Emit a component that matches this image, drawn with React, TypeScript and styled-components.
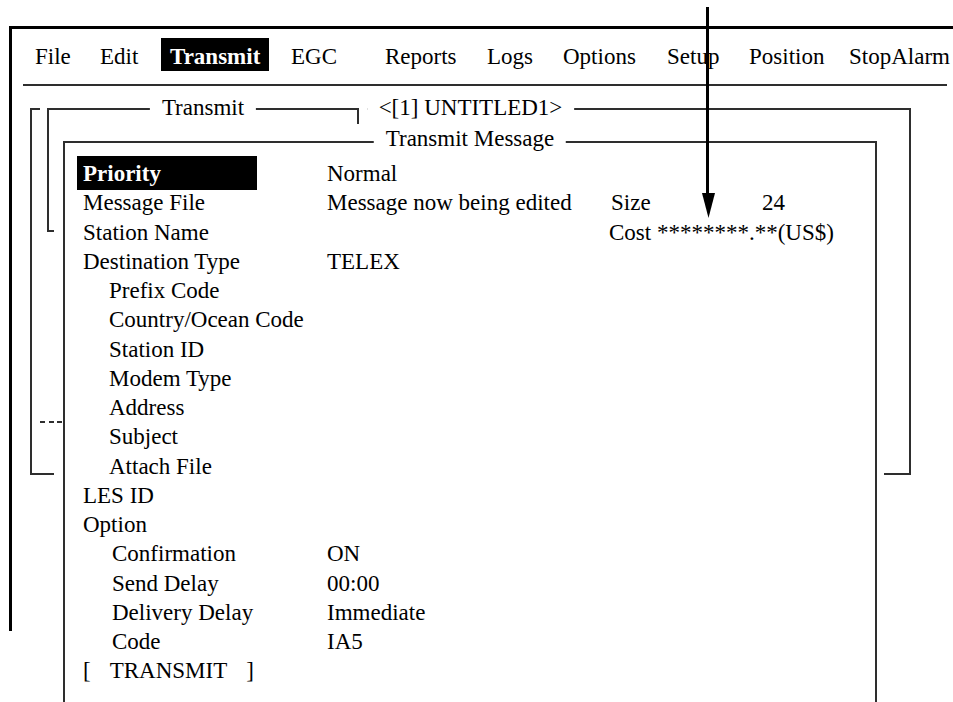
import React from "react";
import styled, { createGlobalStyle } from "styled-components";

const SERIF = `"Liberation Serif", "Times New Roman", "DejaVu Serif", serif`;

const Global = createGlobalStyle`
  html, body { margin: 0; padding: 0; background: #fff; }
  body {
    width: 953px;
    height: 702px;
    overflow: hidden;
    font-family: ${SERIF};
    font-size: 23px;
    color: #000;
  }
`;

const LINE = "#2e2e2e";

const Screen = styled.div`
  position: relative;
  width: 953px;
  height: 702px;
  overflow: hidden;
  box-sizing: border-box;
  padding: 26px 0 0 9px;
  font-family: ${SERIF};
  font-size: 23px;
`;

const Frame = styled.div`
  width: 960px;
  height: 605px;
  box-sizing: border-box;
  border-top: 3px solid #000;
  border-left: 3px solid #000;
`;

const MenuBar = styled.nav`
  display: flex;
  width: 924px;
  box-sizing: border-box;
  margin: 9px 0 0 11px;
  padding: 0 0 13px 12px;
  border-bottom: 2px solid ${LINE};
`;

const MenuCell = styled.div<{ $w?: number }>`
  flex: ${(p) => (p.$w ? `0 0 ${p.$w}px` : "1 1 auto")};
  white-space: nowrap;
`;

const MenuLabel = styled.span<{ $active?: boolean }>`
  display: inline-block;
  height: 33px;
  box-sizing: border-box;
  padding: ${(p) => (p.$active ? "5px 9px 0" : "5px 0 0")};
  line-height: 28px;
  background: ${(p) => (p.$active ? "#000" : "transparent")};
  color: ${(p) => (p.$active ? "#fff" : "#000")};
  font-weight: ${(p) => (p.$active ? "bold" : "normal")};
`;

const Desktop = styled.div`
  position: relative;
  height: 545px;
`;

const Window = styled.section<{ $left: number; $top: number; $z: number; $pad: string }>`
  position: absolute;
  left: ${(p) => p.$left}px;
  top: ${(p) => p.$top}px;
  z-index: ${(p) => p.$z};
  padding: ${(p) => p.$pad};
  background: #fff;
`;

const Box = styled.div<{ $w: number; $h: number }>`
  position: relative;
  box-sizing: border-box;
  width: ${(p) => p.$w}px;
  height: ${(p) => p.$h}px;
  border: 2px solid ${LINE};
  background: #fff;
`;

const Title = styled.h2<{ $top: number }>`
  position: absolute;
  left: 50%;
  top: ${(p) => p.$top}px;
  transform: translateX(-50%);
  margin: 0;
  padding: 0 12px;
  background: #fff;
  font-family: ${SERIF};
  font-size: 23px;
  font-weight: normal;
  line-height: 29.25px;
  white-space: nowrap;
`;

const Form = styled.div`
  padding: 16px 0 0 18px;
`;

const Row = styled.div`
  display: grid;
  grid-template-columns: 244px 282px auto;
  grid-template-rows: 29.25px;
  line-height: 29.25px;
  white-space: nowrap;
`;

const Label = styled.div<{ $indent?: number; $active?: boolean }>`
  box-sizing: border-box;
  padding-left: ${(p) => p.$indent ?? 0}px;
  ${(p) =>
    p.$active &&
    `
    width: 180px;
    margin: -3px 0 -2px -6px;
    padding: 3px 0 2px 6px;
    background: #000;
    color: #fff;
    font-weight: bold;
  `}
`;

const Value = styled.div``;

const Extra = styled.div<{ $shift?: number }>`
  display: flex;
  padding-left: ${(p) => p.$shift ?? 0}px;
`;

const ExtraKey = styled.span`
  flex: 0 0 151px;
`;

const Command = styled.div`
  display: flex;
  gap: 19px;
  line-height: 29.25px;
`;

const Dashes = styled.div`
  position: absolute;
  left: -25px;
  top: 278px;
  width: 23px;
  height: 2px;
  background: repeating-linear-gradient(to right, ${LINE} 0 5px, transparent 5px 8.5px);
`;

const Arrow = styled.svg`
  position: absolute;
  left: 700px;
  top: 6px;
  z-index: 10;
`;

const menu = [
  { t: "File", w: 65 },
  { t: "Edit", w: 61 },
  { t: "Transmit", w: 130, active: true },
  { t: "EGC", w: 94 },
  { t: "Reports", w: 102 },
  { t: "Logs", w: 76 },
  { t: "Options", w: 104 },
  { t: "Setup", w: 82 },
  { t: "Position", w: 100 },
  { t: "StopAlarm" },
];

type Field = { label: string; value?: string; indent?: number; active?: boolean; extra?: React.ReactNode };

const fields: Field[] = [
  { label: "Priority", value: "Normal", active: true },
  {
    label: "Message File",
    value: "Message now being edited",
    extra: (
      <Extra $shift={2}>
        <ExtraKey>Size</ExtraKey>
        <span>24</span>
      </Extra>
    ),
  },
  { label: "Station Name", extra: <Extra>Cost ********.**(US$)</Extra> },
  { label: "Destination Type", value: "TELEX" },
  { label: "Prefix Code", indent: 26 },
  { label: "Country/Ocean Code", indent: 26 },
  { label: "Station ID", indent: 26 },
  { label: "Modem Type", indent: 26 },
  { label: "Address", indent: 26 },
  { label: "Subject", indent: 26 },
  { label: "Attach File", indent: 26 },
  { label: "LES ID" },
  { label: "Option" },
  { label: "Confirmation", value: "ON", indent: 29 },
  { label: "Send Delay", value: "00:00", indent: 29 },
  { label: "Delivery Delay", value: "Immediate", indent: 29 },
  { label: "Code", value: "IA5", indent: 29 },
];

export default function App() {
  return (
    <>
      <Global />
      <Screen>
        <Frame>
          <MenuBar>
            {menu.map((m) => (
              <MenuCell key={m.t} $w={m.w}>
                <MenuLabel $active={m.active}>{m.t}</MenuLabel>
              </MenuCell>
            ))}
          </MenuBar>
          <Desktop>
            <Window $left={18} $top={22} $z={1} $pad="0">
              <Box $w={881} $h={367}>
                <Title $top={-17}>&lt;[1] UNTITLED1&gt;</Title>
              </Box>
            </Window>
            <Window $left={28} $top={22} $z={2} $pad="0 8px 0 7px">
              <Box $w={312} $h={124}>
                <Title $top={-17}>Transmit</Title>
              </Box>
            </Window>
            <Window $left={42} $top={38} $z={3} $pad="17px 7px 0 9px">
              <Box $w={814} $h={600}>
                <Title $top={-19}>Transmit Message</Title>
                <Dashes />
                <Form>
                  {fields.map((f) => (
                    <Row key={f.label}>
                      <Label $indent={f.indent} $active={f.active}>
                        {f.label}
                      </Label>
                      <Value>{f.value}</Value>
                      {f.extra ?? <div />}
                    </Row>
                  ))}
                  <Command>
                    <span>[</span>
                    <span>TRANSMIT</span>
                    <span>]</span>
                  </Command>
                </Form>
              </Box>
            </Window>
          </Desktop>
        </Frame>
        <Arrow width="17" height="214" viewBox="0 0 17 214">
          <line x1="7.5" y1="1" x2="7.5" y2="192" stroke="#000" strokeWidth="3" />
          <polygon points="2,187 15,187 8.5,212" fill="#000" />
        </Arrow>
      </Screen>
    </>
  );
}
